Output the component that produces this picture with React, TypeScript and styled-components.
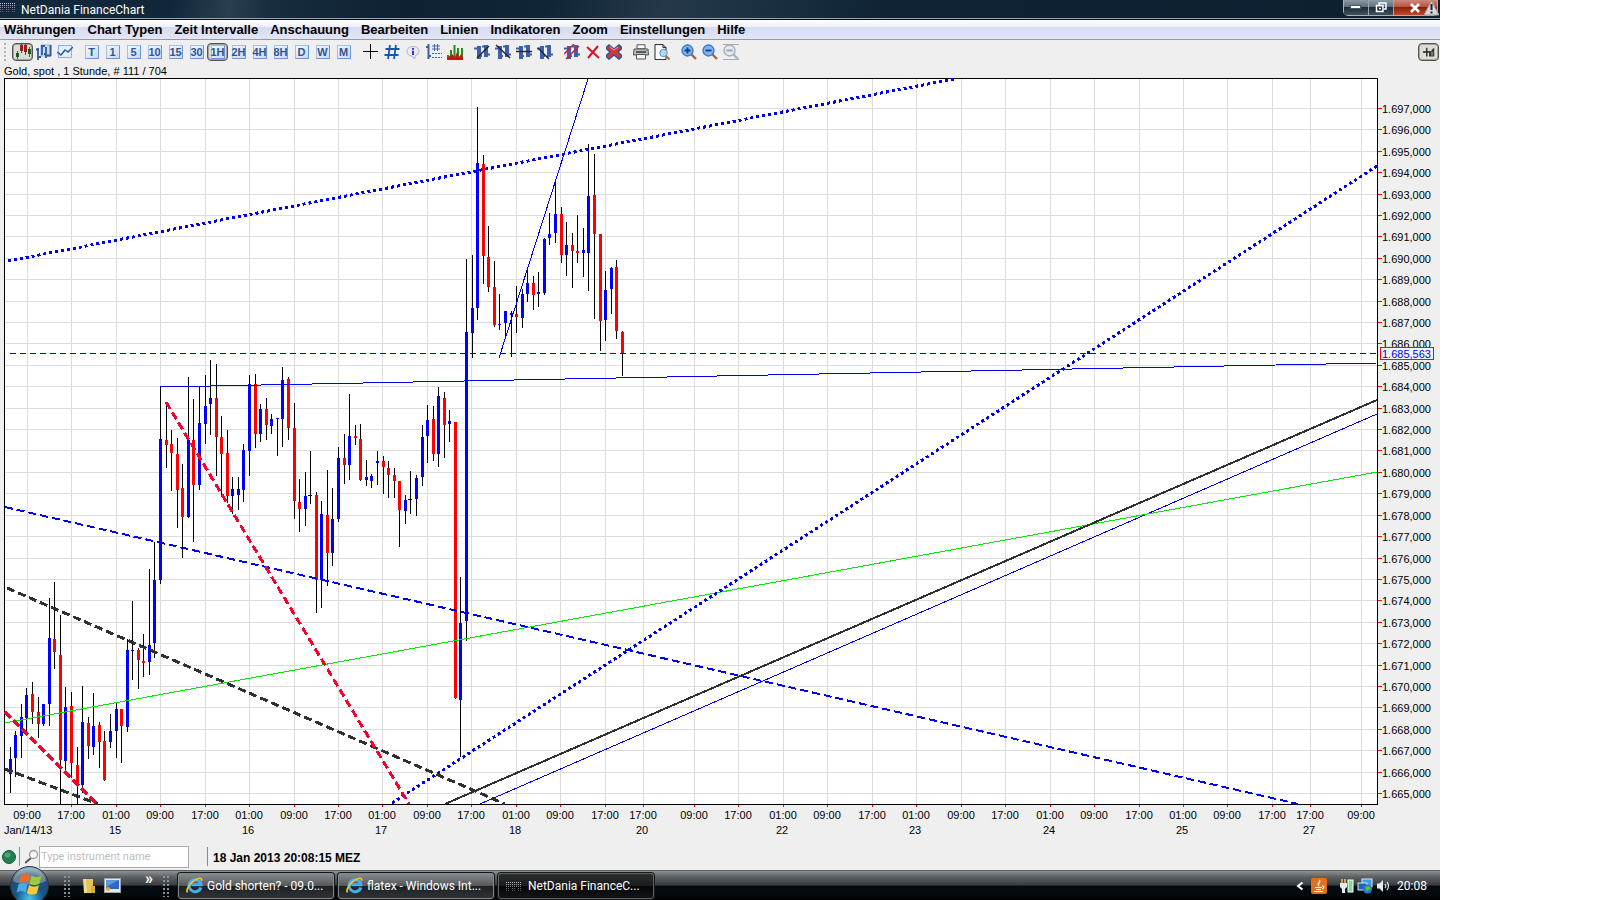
import React from "react";
import styled, { createGlobalStyle, css } from "styled-components";

const arial = `"Liberation Sans", Arial, sans-serif`;
const segoe = `Roboto, "Segoe UI", sans-serif`;

const GlobalStyle = createGlobalStyle`
  *, *::before, *::after { box-sizing: border-box; }
  body { margin: 0; background: #fff; font-family: ${arial}; color: #000; }
  button { font: inherit; color: inherit; padding: 0; margin: 0; border: 0; background: none; }
  svg { display: block; }
`;

/* ---------- shell ---------- */

const Desktop = styled.div`
  padding-right: 177px;
  min-height: 100vh;
  display: flex;
`;

const Shell = styled.div`
  flex: 1;
  min-width: 0;
  display: flex;
  flex-direction: column;
  background: #efefef;
  overflow: hidden;
`;

/* ---------- title bar ---------- */

const TitleBar = styled.header`
  display: flex;
  align-items: flex-start;
  height: 20px;
  padding-right: 2px;
  border-bottom: 1px solid #0a0d12;
  box-shadow: inset 0 -1px 0 #9aa3aa;
  background: linear-gradient(100deg, #14293b 0%, #10263a 12%, #2a4052 16%, #172c3e 19%, #0d2132 28%, #102536 38%, #24384a 46%, #1c3244 52%, #0e2233 62%, #0c2030 100%);
`;

const Title = styled.h1`
  flex: 1;
  margin: 0 0 0 5px;
  font: 400 12px/20px ${segoe};
  color: #fff;
`;

const DotLogo = styled.svg`
  margin-top: 3px;
`;

const WindowControls = styled.div`
  position: relative;
  display: flex;
  height: 16px;
  border: 1px solid #a5b0b8;
  border-top: 0;
  border-radius: 0 0 5px 5px;
`;

const ControlButton = styled.button<{ $close?: boolean }>`
  width: ${(p) => (p.$close ? 43 : 25)}px;
  height: 15px;
  display: grid;
  place-items: center;
  border-right: 1px solid ${(p) => (p.$close ? "transparent" : "#9aa6ae")};
  border-radius: ${(p) => (p.$close ? "0 0 4px 0" : "0")};
  background: ${(p) =>
    p.$close
      ? "linear-gradient(#c98a7c 0, #b8543f 45%, #8e1f0c 50%, #c24a2c 100%)"
      : "linear-gradient(#8c99a3 0, #5f6f7b 45%, #1b2c3a 50%, #41525f 100%)"};
`;

const Warning = styled.svg`
  position: absolute;
  right: -2px;
  top: 0;
`;

/* ---------- menu ---------- */

const MenuBar = styled.nav`
  display: flex;
  gap: 12px;
  height: 20px;
  padding-left: 4px;
  border-bottom: 1px solid #9a9a9a;
  background: linear-gradient(#ffffff 0, #eef0fa 35%, #d5daef 36%, #e2e6f8 100%);
`;

const MenuItem = styled.button`
  font: 700 13px/18px ${arial};
  white-space: nowrap;
`;

/* ---------- toolbar ---------- */

const ToolBar = styled.div`
  display: flex;
  align-items: flex-start;
  height: 25px;
  padding: 3px 1px 0 4px;
`;

const Grip = styled.span`
  width: 2px;
  height: 20px;
  margin-right: 6px;
  background: repeating-linear-gradient(#b5b5b5 0 2px, transparent 2px 4px);
`;

const ToolGroup = styled.div`
  display: flex;
  margin-right: 6px;
`;

const ToolButton = styled.button<{ $active?: boolean }>`
  width: 21px;
  height: 18px;
  display: grid;
  place-items: center;
  ${(p) =>
    p.$active &&
    css`
      border: 1px solid #55554f;
      border-radius: 4px;
      background: #dcdcd8;
      box-shadow: inset 0 0 0 1px #a3a39c;
    `}
`;

const IntervalFace = styled.span`
  width: 14px;
  height: 14px;
  display: flex;
  align-items: center;
  justify-content: center;
  border: 1px solid #a4bfe6;
  border-right-color: #6c97d6;
  border-bottom-color: #6c97d6;
  background: linear-gradient(135deg, #f4f9ff, #c4daf8);
  font: 700 11px/12px ${arial};
  color: #34558c;
  white-space: nowrap;
`;

const Spacer = styled.div`
  flex: 1;
`;

/* ---------- chart ---------- */

const ChartCaption = styled.p`
  margin: 0;
  height: 13px;
  padding-left: 4px;
  font: 400 11px/13px ${arial};
`;

const Chart = styled.svg`
  width: 100%;
  height: auto;
  font: 400 11px ${arial};
`;

/* ---------- status bar ---------- */

const StatusBar = styled.div`
  display: flex;
  align-items: center;
  height: 27px;
  padding: 0 2px;
`;

const StatusRule = styled.span<{ $gap: number }>`
  width: 1px;
  height: 19px;
  margin: 0 5px 0 ${(p) => p.$gap}px;
  background: #8a8a8a;
`;

const Search = styled.label`
  display: flex;
  align-items: center;
`;

const SearchInput = styled.input`
  width: 150px;
  height: 22px;
  padding: 0 1px;
  border: 1px solid #a9abad;
  background: #fff;
  font: 400 11px/20px ${segoe};
  outline: 0;
  &::placeholder { color: #bdbdbd; opacity: 1; }
`;

const Clock = styled.time`
  padding-top: 3px;
  font: 700 12px/24px ${arial};
`;

/* ---------- taskbar ---------- */

const TaskBar = styled.footer`
  position: relative;
  display: flex;
  align-items: center;
  height: 30px;
  padding: 0 13px 0 63px;
  border-top: 1px solid #5c6062;
  background: linear-gradient(#8e9293 0, #5d6163 20%, #3a3e40 48%, #060b0f 52%, #04090d 85%, #000 100%);
  color: #fff;
  font: 400 12px/16px ${segoe};
`;

const StartButton = styled.button`
  position: absolute;
  left: 8px;
  top: -5px;
  height: 35px;
  overflow: hidden;
`;

const DotGrip = styled.span`
  width: 9px;
  height: 22px;
  background: radial-gradient(circle, #8d9193 1px, transparent 1px) 0 0 / 4px 4px;
`;

const QuickLaunch = styled.div`
  display: flex;
  align-items: center;
  gap: 7px;
  width: 90px;
  padding-left: 9px;
`;

const More = styled.button`
  margin: -14px 0 0 17px;
  font-weight: 700;
  font-size: 16px;
`;

const Tasks = styled.div`
  display: flex;
  gap: 4px;
  margin-left: 7px;
`;

const Task = styled.button<{ $active?: boolean }>`
  display: flex;
  align-items: center;
  gap: ${(p) => (p.$active ? 6 : 4)}px;
  width: 156px;
  height: 26px;
  padding-left: 7px;
  border: 1px solid ${(p) => (p.$active ? "#5d6264" : "#82878a")};
  border-radius: 3px;
  box-shadow: 0 0 0 1px #15191c;
  background: ${(p) =>
    p.$active
      ? "linear-gradient(#2b2d2f, #1a1c1e 48%, #060708 52%, #121416)"
      : "linear-gradient(#85898b, #55595b 48%, #1d2225 52%, #2c3236)"};
  white-space: nowrap;
`;

const Tray = styled.div`
  display: flex;
  align-items: center;
  gap: 3px;
`;

const TrayClock = styled.time`
  margin-left: 3px;
`;

/* ---------- icons ---------- */

const Dots = () => (
  <DotLogo width="16" height="10" viewBox="0 0 16 10" aria-hidden="true">
    {Array.from({ length: 8 }, (_, c) =>
      Array.from({ length: 5 }, (_, r) =>
        r > 2 && c % 3 === 2 ? null : (
          <rect key={`${c}-${r}`} x={c * 2} y={r * 2} width="1" height="1" fill="#b9c0c4" opacity={1 - r * 0.16} />
        )
      )
    )}
  </DotLogo>
);

const Icon = ({ children, size = 16 }: { children: React.ReactNode; size?: number }) => (
  <svg width={size} height={size} viewBox="0 0 16 16" fill="none" aria-hidden="true">
    {children}
  </svg>
);

const bars = (
  <g stroke="#3d5fae" strokeWidth="4">
    <path d="M5 2v13M12 1v12" />
    <path d="M0 4.500h4M12 10.500h4M4 12h4M8 2.500h4" strokeWidth="2" />
  </g>
);

const Magnifier = ({ sign, muted }: { sign: "+" | "-"; muted?: boolean }) => (
  <Icon>
    {muted && <path d="M0 .5h16M0 15.500h16" stroke="#a3acb8" />}
    <path d="M10 10l5 5" stroke={muted ? "#a9b2bd" : "#9b6a3c"} strokeWidth="2.400" />
    <circle cx="6.500" cy="6.500" r="5.500" fill={muted ? "#e3e9f0" : "#7fb4ee"} stroke={muted ? "#a3acb8" : "#3a78c4"} strokeWidth="1.300" />
    <path d={sign === "+" ? "M3.500 6.500h6M6.500 3.500v6" : "M3.500 6.500h6"} stroke={muted ? "#98a3b0" : "#0d3f86"} strokeWidth="1.800" />
  </Icon>
);

const CandlesIcon = () => (
  <Icon>
    <path d="M2.500 7v8M14.500 3v10" stroke="#3a6a35" />
    <path d="M6.500 0v9M10.500 0v11" stroke="#7d3a3a" />
    <path d="M1 9h3v4H1zM13 5h3v5h-3z" fill="#1d5c1b" />
    <path d="M5 1h3v6H5zM9 1h3v7H9z" fill="#9b2025" />
  </Icon>
);

const OhlcIcon = () => (
  <Icon>
    <path d="M5 1h10v11H5z" fill="#c9dcf7" stroke="#8db1e4" />
    <path d="M2 4v12M6 1v10M10 3v11M14.500 1v11M0 5.500h3M2 13h3M5 2h4M8 10h3M11 11.500h4" stroke="#34589f" strokeWidth="1.800" />
  </Icon>
);

const LineIcon = () => (
  <Icon>
    <rect x="1.500" y="1.500" width="13" height="12" fill="#e4effd" stroke="#8db1e4" />
    <path d="M0 8l4 3 4-5 3 2 5-5" stroke="#33599c" strokeWidth="1.500" />
  </Icon>
);

const CrossIcon = () => (
  <Icon><path d="M7.500 0v15M0 7.500h15" stroke="#000" /></Icon>
);

const GridIcon = () => (
  <Icon><path d="M6 1L4 15M12 1l-2 14M1.500 5h14M.5 11h14" stroke="#1658a8" strokeWidth="1.800" /></Icon>
);

const InfoIcon = () => (
  <Icon>
    <path d="M8 2.500c3.500 0 6 2 6 4.700 0 2.400-1.500 3.600-3.500 4.300L9.500 15 7 12C4 12 2 10 2 7.200c0-2.700 2.500-4.700 6-4.700z" fill="#e9e9ee" stroke="#b4b4ba" />
    <path d="M8 4v1.800M8 6.700V11" stroke="#2a35d8" strokeWidth="2" />
  </Icon>
);

const ScaleGridIcon = () => (
  <Icon>
    <path d="M2.500 0v15M0 3h3M2 12h3" stroke="#3d5fae" strokeWidth="2" />
    <path d="M8.500 0v7M11.500 0v7M6 2h8M6 5h8" stroke="#4568b0" />
    <path d="M6 9.500h10M6 13.500h10" stroke="#3d5fae" strokeDasharray="2 1" />
  </Icon>
);

const VolumeBarsIcon = () => (
  <Icon>
    <path d="M1 16v-5M4 16V6M7.500 16V1M11 16V4M15 16V4" stroke="#24901c" strokeWidth="2" />
    <path d="M0 16h16v-3l-2-3-2 3-2-5-2 5-3-3-2 2-3 1z" fill="#c01818" />
  </Icon>
);

const TrendIcon = ({ d, color = "#26292e" }: { d: string; color?: string }) => (
  <Icon>
    {bars}
    <path d={d} stroke={color} strokeWidth="1.500" />
  </Icon>
);

const DeleteIcon = () => (
  <Icon><path d="M2 3l12 11M13 2L3 14" stroke="#d8132c" strokeWidth="2" /></Icon>
);

const DeleteAllIcon = () => (
  <Icon>
    <path d="M3 1l5 4 5-4 3 3-4 4 4 4-3 3-5-4-5 4-3-3 4-4-4-4z" fill="#d9363b" stroke="#34558f" strokeWidth="1.600" />
    <path d="M4 3l4 3 4-3" stroke="#f39a9a" />
  </Icon>
);

const PrinterIcon = () => (
  <Icon>
    <path d="M4 .8h8v4H4z" fill="#fff" stroke="#555" />
    <path d="M1 5h14l.5 6H.5z" fill="#b9bec2" stroke="#4f5457" />
    <path d="M3 8h10" stroke="#353a3d" strokeWidth="1.500" />
    <path d="M3.500 10.500h9v4.500h-9z" fill="#f5f8fa" stroke="#555" />
    <path d="M13 6.500h1" stroke="#4ba245" />
  </Icon>
);

const PreviewIcon = () => (
  <Icon>
    <path d="M1 .6h8l3 3v12H1z" fill="#fff" stroke="#222" />
    <path d="M9 .6v3h3" stroke="#222" />
    <path d="M11 11l4.500 4.500" stroke="#a2733f" strokeWidth="2" />
    <circle cx="9.500" cy="9" r="3.700" fill="#b4daf3" stroke="#4e92c8" />
  </Icon>
);

const PinIcon = () => (
  <Icon size={14}>
    <path d="M1 8h4M5.500 3v10M6 8h3" stroke="#222" strokeWidth="1.500" />
    <path d="M8 6.500l3 .5V5.500L14 3v10H8z" fill="#3a3a3a" />
    <path d="M11.500 8v4" stroke="#c9c9c9" />
  </Icon>
);

const IeIcon = () => (
  <svg width="17" height="17" viewBox="0 0 17 17" fill="none" aria-hidden="true">
    <path d="M14.800 10.500A6 6 0 1 1 15 7.800H5.500" stroke="#3fb1ec" strokeWidth="3" />
    <path d="M1.500 15.500C-.5 13 4 6 9 3c4-2.400 7.500-2.500 6.500.8" stroke="#f3c02c" strokeWidth="1.700" />
  </svg>
);

const StartOrb = () => (
  <svg width="43" height="43" viewBox="0 0 43 43" aria-hidden="true">
    <defs>
      <radialGradient id="orb" cx=".5" cy=".85" r=".8">
        <stop offset="0" stopColor="#46c6ec" />
        <stop offset=".45" stopColor="#14568a" />
        <stop offset=".8" stopColor="#2d4a66" />
        <stop offset="1" stopColor="#8ba6b8" />
      </radialGradient>
    </defs>
    <circle cx="21.500" cy="19.500" r="19" fill="url(#orb)" stroke="#28353f" />
    <path d="M5 15a17 17 0 0 1 33 0c-9 5-24 5-33 0z" fill="#c4dbe6" opacity=".4" />
    <path d="M13 9c3-2 6-2 9 0l-2 8c-3-2-6-2-9 0z" fill="#ee6a2b" />
    <path d="M23.500 9.500c3 2 7 2 10 0l-2 8c-3 2-7 2-10 0z" fill="#9ccb3c" />
    <path d="M10.500 18.500c3-2 6-2 9 0l-2 8c-3-2-6-2-9 0z" fill="#4ea9e8" />
    <path d="M21 19c3 2 7 2 10 0l-2 8c-3 2-7 2-10 0z" fill="#fbc934" />
  </svg>
);

/* ---------- chart data ---------- */

type Tone = "u" | "d" | "n";
type Candle = [high: number, top: number, bottom: number, low: number, tone: Tone];

const candles: Candle[] = [
  [747, 759, 774, 793, "u"], [731, 735, 758, 777, "u"], [704, 717, 736, 758, "u"], [688, 695, 718, 733, "u"],
  [682, 694, 712, 724, "d"], [697, 712, 724, 738, "d"], [704, 704, 724, 726, "u"], [598, 638, 704, 726, "u"],
  [582, 639, 652, 669, "d"], [615, 655, 760, 804, "d"], [687, 707, 761, 772, "u"], [692, 706, 763, 778, "d"],
  [747, 765, 784, 804, "d"], [686, 722, 785, 793, "u"], [717, 723, 746, 759, "d"], [693, 726, 747, 755, "u"],
  [722, 725, 742, 768, "d"], [731, 741, 780, 781, "d"], [714, 731, 742, 748, "u"], [703, 709, 731, 758, "u"],
  [709, 709, 726, 763, "d"], [639, 650, 727, 732, "u"], [601, 650, 651, 680, "u"], [648, 650, 660, 689, "d"],
  [634, 661, 663, 677, "d"], [569, 645, 662, 675, "u"], [542, 580, 643, 658, "u"], [386, 439, 580, 584, "u"],
  [403, 440, 445, 468, "d"], [430, 444, 453, 491, "d"], [438, 454, 490, 528, "d"], [464, 488, 517, 558, "d"],
  [377, 440, 517, 518, "u"], [399, 440, 485, 542, "d"], [386, 423, 485, 490, "u"], [375, 406, 424, 444, "u"],
  [360, 398, 404, 435, "u"], [364, 398, 437, 476, "d"], [416, 437, 454, 495, "d"], [430, 453, 496, 503, "d"],
  [477, 489, 496, 514, "u"], [477, 489, 495, 510, "u"], [444, 450, 490, 502, "u"], [375, 384, 451, 476, "u"],
  [374, 384, 434, 448, "d"], [404, 409, 434, 442, "u"], [398, 409, 425, 440, "d"], [414, 419, 426, 434, "u"],
  [418, 418, 419, 456, "u"], [367, 380, 419, 447, "u"], [377, 379, 428, 440, "d"], [403, 428, 501, 519, "d"],
  [479, 502, 509, 532, "d"], [472, 496, 509, 526, "u"], [451, 495, 496, 504, "n"], [492, 495, 580, 613, "d"],
  [501, 514, 580, 608, "u"], [470, 515, 553, 586, "d"], [488, 519, 553, 566, "u"], [447, 458, 519, 522, "u"],
  [434, 458, 465, 484, "d"], [394, 436, 465, 480, "u"], [425, 436, 438, 445, "d"], [424, 439, 480, 481, "d"],
  [460, 477, 480, 486, "u"], [474, 476, 481, 488, "u"], [451, 461, 463, 485, "u"], [456, 461, 467, 494, "d"],
  [461, 468, 475, 498, "d"], [468, 475, 481, 498, "d"], [481, 481, 510, 547, "d"], [495, 500, 511, 524, "u"],
  [471, 499, 500, 514, "n"], [475, 478, 499, 516, "u"], [425, 437, 477, 486, "u"], [405, 420, 436, 463, "u"],
  [406, 419, 454, 461, "d"], [387, 396, 454, 467, "u"], [392, 398, 425, 458, "d"], [410, 421, 424, 442, "u"],
  [422, 422, 698, 699, "d"], [577, 623, 700, 757, "u"], [259, 332, 621, 641, "u"], [255, 308, 333, 358, "u"],
  [107, 163, 308, 320, "u"], [155, 164, 256, 284, "d"], [226, 257, 287, 292, "d"], [261, 287, 325, 327, "d"],
  [294, 324, 325, 330, "u"], [311, 311, 323, 338, "u"], [311, 313, 315, 357, "u"], [286, 314, 317, 333, "d"],
  [289, 294, 318, 328, "u"], [270, 283, 294, 302, "u"], [276, 283, 295, 310, "d"], [272, 292, 294, 307, "u"],
  [238, 239, 293, 295, "u"], [213, 234, 238, 245, "u"], [180, 214, 233, 243, "u"], [207, 214, 255, 263, "d"],
  [222, 245, 255, 276, "u"], [233, 245, 251, 288, "d"], [215, 251, 253, 263, "d"], [228, 250, 253, 277, "u"],
  [144, 196, 253, 291, "u"], [154, 195, 234, 319, "d"], [234, 234, 321, 351, "d"], [271, 290, 320, 341, "u"],
  [267, 268, 289, 314, "u"], [260, 267, 331, 339, "d"], [331, 332, 353, 376, "d"],
];

const toneColor: Record<Tone, string> = { u: "#0000ff", d: "#ff0000", n: "#000000" };
const candleX = (i: number) => Math.floor(10.3 + i * 5.5636);

const ticks: [x: number, time: string, day?: string][] = [
  [27, "09:00"], [71, "17:00"], [116, "01:00", "15"], [160, "09:00"], [205, "17:00"], [249, "01:00", "16"],
  [294, "09:00"], [338, "17:00"], [382, "01:00", "17"], [427, "09:00"], [471, "17:00"], [516, "01:00", "18"],
  [560, "09:00"], [605, "17:00"], [643, "17:00", "20"], [694, "09:00"], [738, "17:00"], [783, "01:00", "22"],
  [827, "09:00"], [872, "17:00"], [916, "01:00", "23"], [961, "09:00"], [1005, "17:00"], [1050, "01:00", "24"],
  [1094, "09:00"], [1139, "17:00"], [1183, "01:00", "25"], [1227, "09:00"], [1272, "17:00"], [1310, "17:00", "27"],
  [1361, "09:00"],
];

const prices = Array.from({ length: 33 }, (_, i) => ({
  label: `1.${697 - i},000`,
  y: Math.floor(108.4 + i * 21.41),
}));

const trendLines: { d: string; color: string; width: number; dash?: string }[] = [
  { d: "M160 387L1377 363", color: "#0000f0", width: 1 },
  { d: "M499 358L588 79", color: "#0000f0", width: 1 },
  { d: "M480 804L1377 414", color: "#0000f0", width: 1 },
  { d: "M5 723L1377 472", color: "#00e800", width: 1 },
  { d: "M445 804L1377 400", color: "#303030", width: 2 },
  { d: "M5 507L1298 804", color: "#0000f0", width: 2, dash: "8 4" },
  { d: "M8 261L954 79", color: "#0000f0", width: 3, dash: "3 3" },
  { d: "M392 803L1377 166", color: "#0000f0", width: 3, dash: "3 3" },
  { d: "M7 588L505 804", color: "#303030", width: 3, dash: "8 4" },
  { d: "M5 769L98 804", color: "#303030", width: 3, dash: "8 4" },
  { d: "M5 712L97 804", color: "#f8002e", width: 3, dash: "8 4" },
  { d: "M166 402L409 804", color: "#f8002e", width: 3, dash: "8 4" },
];

const PriceChart = () => (
  <Chart viewBox="0 78 1440 765" role="img" aria-label="Gold spot, hourly candles">
    <g shapeRendering="crispEdges">
      <rect x="4" y="78" width="1374" height="727" fill="#000" />
      <rect x="5" y="79" width="1372" height="725" fill="#fff" />
      {ticks.map(([x]) => (
        <React.Fragment key={x}>
          <rect x={x} y="79" width="1" height="725" fill="#dcdcdc" />
          <rect x={x} y="805" width="1" height="2" fill="#f00" />
        </React.Fragment>
      ))}
      {prices.map(({ y }) => (
        <React.Fragment key={y}>
          <rect x="5" y={y} width="1372" height="1" fill="#dcdcdc" />
          <rect x="1378" y={y} width="4" height="1" fill="#f00" />
        </React.Fragment>
      ))}
      {candles.map(([high, top, bottom, low, tone], i) => (
        <React.Fragment key={i}>
          <rect x={candleX(i)} y={high} width="1" height={low - high} fill="#000" />
          <rect
            x={candleX(i) - (tone === "n" ? 2 : 1)}
            y={top}
            width={tone === "n" ? 4 : 3}
            height={Math.max(1, bottom - top)}
            fill={toneColor[tone]}
          />
        </React.Fragment>
      ))}
      <path d="M10 353.500H1377" stroke="#0000f0" strokeDasharray="6 4" />
      {trendLines.map((l) => (
        <path key={l.d} d={l.d} stroke={l.color} strokeWidth={l.width} strokeDasharray={l.dash} fill="none" />
      ))}
    </g>
    {ticks.map(([x, time, day]) => (
      <g key={x} textAnchor="middle">
        <text x={x} y="819">{time}</text>
        {day && <text x={x - 1} y="834">{day}</text>}
      </g>
    ))}
    <text x="4" y="834">Jan/14/13</text>
    {prices.map(({ label, y }) => (
      <text key={label} x="1382" y={y + 5}>{label}</text>
    ))}
    <rect x="1380.500" y="347.500" width="53" height="12" fill="#f4f4f4" stroke="#f00" shapeRendering="crispEdges" />
    <text x="1382" y="358" fill="#0000ff">1.685,563</text>
  </Chart>
);

/* ---------- page ---------- */

const menus = ["Währungen", "Chart Typen", "Zeit Intervalle", "Anschauung", "Bearbeiten", "Linien", "Indikatoren", "Zoom", "Einstellungen", "Hilfe"];
const intervals = ["T", "1", "5", "10", "15", "30", "1H", "2H", "4H", "8H", "D", "W", "M"];

type Tool = { name: string; icon: React.ReactNode; active?: boolean };

const chartTypes: Tool[] = [
  { name: "Candlesticks", icon: <CandlesIcon />, active: true },
  { name: "OHLC", icon: <OhlcIcon /> },
  { name: "Line", icon: <LineIcon /> },
];

const toolGroups: Tool[][] = [
  [
    { name: "Crosshair", icon: <CrossIcon /> },
    { name: "Grid", icon: <GridIcon /> },
    { name: "Info", icon: <InfoIcon /> },
    { name: "Scale", icon: <ScaleGridIcon /> },
    { name: "Volume", icon: <VolumeBarsIcon /> },
  ],
  [
    { name: "Rising line", icon: <TrendIcon d="M3 14L15 2" /> },
    { name: "Falling line", icon: <TrendIcon d="M1 1l14 13" /> },
    { name: "Horizontal line", icon: <TrendIcon d="M0 7.500h16" /> },
    { name: "Segment", icon: <TrendIcon d="M1 4l11 11" /> },
  ],
  [
    { name: "Channel", icon: <TrendIcon d="M2 15L15 2M0 10L10 0" color="#d0202c" /> },
    { name: "Delete", icon: <DeleteIcon /> },
    { name: "Delete all", icon: <DeleteAllIcon /> },
  ],
  [
    { name: "Print", icon: <PrinterIcon /> },
    { name: "Preview", icon: <PreviewIcon /> },
  ],
  [
    { name: "Zoom in", icon: <Magnifier sign="+" /> },
    { name: "Zoom out", icon: <Magnifier sign="-" /> },
    { name: "Zoom reset", icon: <Magnifier sign="-" muted /> },
  ],
];

const Tools = ({ items }: { items: Tool[] }) => (
  <ToolGroup>
    {items.map((t) => (
      <ToolButton key={t.name} $active={t.active} aria-label={t.name}>{t.icon}</ToolButton>
    ))}
  </ToolGroup>
);

export default function App() {
  return (
    <>
      <GlobalStyle />
      <Desktop>
        <Shell>
          <TitleBar>
            <Dots />
            <Title>NetDania FinanceChart</Title>
            <WindowControls>
              <ControlButton aria-label="Minimize">
                <svg width="12" height="5"><rect x=".5" y=".5" width="10" height="3" fill="#fff" stroke="#4d5962" /></svg>
              </ControlButton>
              <ControlButton aria-label="Restore">
                <svg width="12" height="11" fill="none" stroke="#fff" strokeWidth="1.500"><path d="M4 3V1h7v6H9" /><path d="M1.500 3.500h6.500v6H1.500z" /><path d="M4 6.500h2" /></svg>
              </ControlButton>
              <ControlButton $close aria-label="Close">
                <svg width="12" height="10"><path d="M2 1l8 8M10 1L2 9" stroke="#fff" strokeWidth="2.600" /></svg>
              </ControlButton>
              <Warning width="15" height="16" viewBox="0 0 15 16" aria-hidden="true">
                <path d="M7.500 1L15 15H0z" fill="#d7d9da" stroke="#9da0a2" />
                <path d="M7.500 4v6M7.500 11.500v2" stroke="#222" strokeWidth="2" />
              </Warning>
            </WindowControls>
          </TitleBar>

          <MenuBar>
            {menus.map((m) => <MenuItem key={m}>{m}</MenuItem>)}
          </MenuBar>

          <ToolBar>
            <Grip />
            <Tools items={chartTypes} />
            <ToolGroup>
              {intervals.map((n) => (
                <ToolButton key={n} $active={n === "1H"}>
                  <IntervalFace>{n}</IntervalFace>
                </ToolButton>
              ))}
            </ToolGroup>
            {toolGroups.map((g) => <Tools key={g[0].name} items={g} />)}
            <Spacer />
            <ToolButton $active aria-label="Pin"><PinIcon /></ToolButton>
          </ToolBar>

          <ChartCaption>Gold, spot , 1 Stunde, # 111 / 704</ChartCaption>
          <PriceChart />

          <StatusBar>
            <svg width="14" height="14" viewBox="0 0 14 14" aria-hidden="true">
              <circle cx="7" cy="7" r="6.500" fill="#1f8050" stroke="#12603a" />
              <ellipse cx="5.500" cy="5" rx="3" ry="2.500" fill="#5fb58a" opacity=".7" />
            </svg>
            <StatusRule $gap={3} />
            <Search>
              <svg width="14" height="16" viewBox="0 0 14 16" fill="none" aria-hidden="true">
                <path d="M6 9l-6 5" stroke="#555" strokeWidth="2" />
                <circle cx="8.500" cy="5.500" r="4" fill="#fafafa" stroke="#999" strokeWidth="1.300" />
              </svg>
              <SearchInput aria-label="Instrument" placeholder="Type instrument name" />
            </Search>
            <StatusRule $gap={18} />
            <Clock>18 Jan 2013 20:08:15 MEZ</Clock>
          </StatusBar>

          <TaskBar>
            <StartButton aria-label="Start"><StartOrb /></StartButton>
            <DotGrip />
            <QuickLaunch>
              <svg width="16" height="16" viewBox="0 0 16 16" aria-hidden="true">
                <path d="M2 1h8l1 14H3z" fill="#f1dd8c" />
                <path d="M5 1h7v14H6z" fill="#e2c35c" />
                <path d="M10 8h4v7h-4z" fill="#d5ab3a" />
              </svg>
              <svg width="17" height="15" viewBox="0 0 17 15" aria-hidden="true">
                <rect x=".5" y=".5" width="16" height="14" fill="#e3e7ea" stroke="#9da6ad" />
                <rect x="2" y="2" width="13" height="9" fill="#3368bd" />
                <path d="M2 2h13L2 9z" fill="#5f96dc" />
                <circle cx="4" cy="11" r="2" fill="#f0a72f" />
              </svg>
              <More aria-label="More">»</More>
            </QuickLaunch>
            <DotGrip />
            <Tasks>
              <Task><IeIcon />Gold shorten? - 09.0...</Task>
              <Task><IeIcon />flatex - Windows Int...</Task>
              <Task $active><Dots />NetDania FinanceC...</Task>
            </Tasks>
            <Spacer />
            <Tray>
              <svg width="8" height="10" fill="none" aria-hidden="true"><path d="M6.500 1.500L2 5l4.500 3.500" stroke="#fff" strokeWidth="2" /></svg>
              <svg width="20" height="16" viewBox="0 0 20 16" fill="none" aria-hidden="true">
                <rect x="4" width="16" height="16" rx="2" fill="#e0701d" />
                <path d="M12 2c3 2-3 3 0 6M8 9.500h7M9 11.500h5M7 13.500h9M15 8c3 0 2 2 0 3" stroke="#fff" strokeWidth="1.200" />
              </svg>
              <svg width="24" height="16" viewBox="0 0 24 16" fill="none" aria-hidden="true">
                <path d="M12 1v4M15 1v4" stroke="#e9c84c" strokeWidth="1.500" />
                <path d="M10 5h7v4l-2 2v4h-3v-4l-2-2z" fill="#e9e9e9" />
                <rect x="18" y="2" width="5" height="12" fill="#86d59a" stroke="#fff" />
              </svg>
              <svg width="16" height="16" viewBox="0 0 16 16" aria-hidden="true">
                <rect x="5" y="1" width="10" height="8" fill="#3ea0e6" stroke="#d9e6ef" />
                <rect x="1" y="5" width="9" height="7" fill="#1d65b8" stroke="#d9e6ef" />
                <circle cx="10.500" cy="11" r="4.500" fill="#2878c8" />
                <path d="M8 9l4-1 2 3-3 1-1 2z" fill="#57c146" />
              </svg>
              <svg width="15" height="16" viewBox="0 0 15 16" fill="none" aria-hidden="true">
                <path d="M1 5.500h2.500L7 2v12L3.500 10.500H1z" fill="#e8e8e8" />
                <path d="M9 6c1 1 1 3 0 4M11 4c2 2 2 6 0 8" stroke="#cfe6d2" strokeWidth="1.300" />
              </svg>
              <TrayClock>20:08</TrayClock>
            </Tray>
          </TaskBar>
        </Shell>
      </Desktop>
    </>
  );
}
